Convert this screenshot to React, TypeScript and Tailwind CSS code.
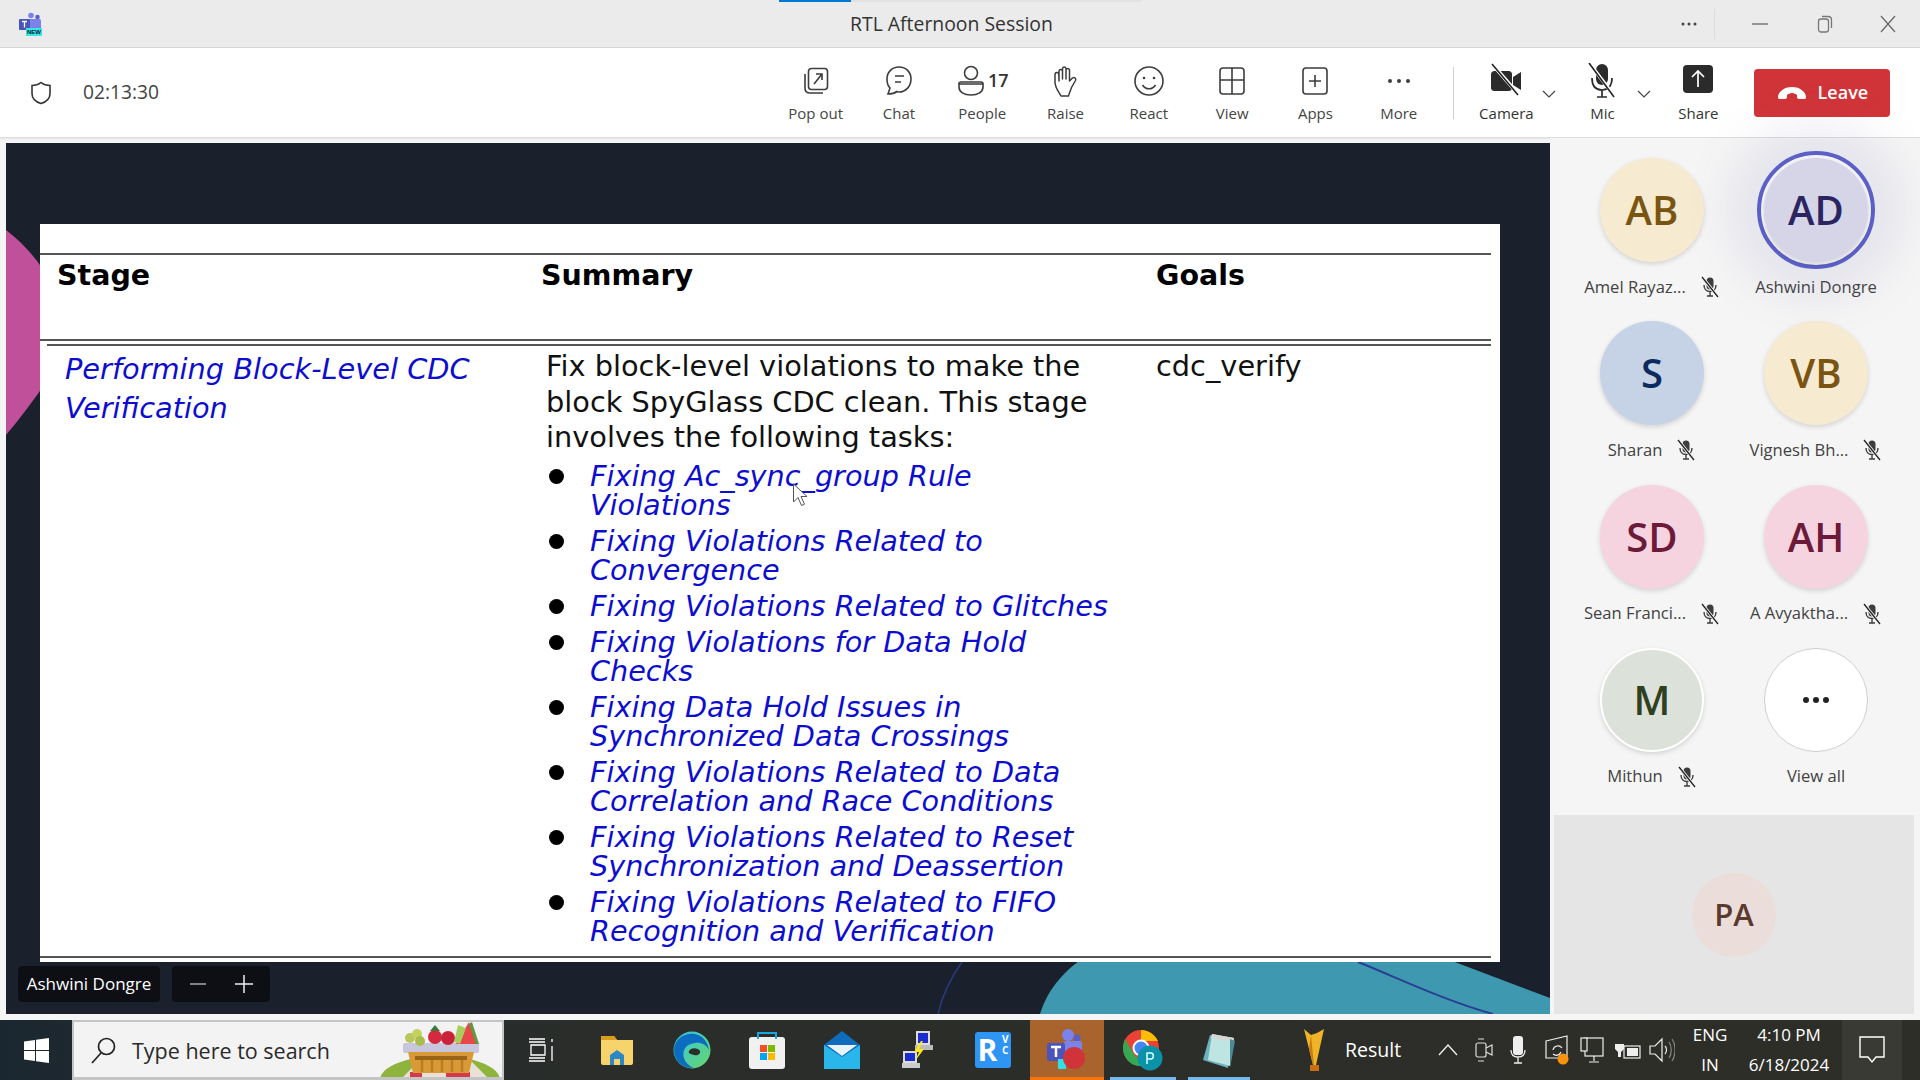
import React from "react";

const tools: { label: string; icon: React.ReactNode; wide?: boolean }[] = [
  { label: "Pop out", icon: <svg width="30" height="30" viewBox="0 0 30 30" fill="none" stroke="#3d3d3d" strokeWidth="1.6"><rect x="7.5" y="2.5" width="19" height="21" rx="3" /><path d="M4 8v14c0 3 2 5 5 5h13" /><path d="M13 18l8-10M15 8h6v6" /></svg> },
  { label: "Chat", icon: <svg width="30" height="32" viewBox="0 0 30 32" fill="none" stroke="#3d3d3d" strokeWidth="1.6"><path d="M15 2C8 2 3 7 3 14c0 4 1 7 3 9l-2 6c3 0 7-1 9-2.500 1 .300 1.500.500 2 .500 7 0 12-6 12-13S22 2 15 2z" /><path d="M11 11h9M11 17h6" /></svg> },
  { label: "People", icon: <svg width="30" height="32" viewBox="0 0 30 32" fill="none" stroke="#3d3d3d" strokeWidth="1.6"><circle cx="15" cy="8" r="6.500" /><path d="M3 19h24v3c0 5-5 8-12 8S3 27 3 22z" /><path d="M3 19c0-1 1-2 2-2h20c1 0 2 1 2 2" /></svg> },
  { label: "Raise", icon: <svg width="28" height="32" viewBox="0 0 28 32" fill="none" stroke="#3d3d3d" strokeWidth="1.500" strokeLinejoin="round"><path d="M7 16V6a1.800 1.800 0 013.500 0v8V3.500a1.800 1.800 0 013.500 0V14V5a1.800 1.800 0 013.500 0v11l3-3c2-1.500 4 .500 3 2.500l-4 7c-1 3-2 5-3 8.500H9C7 27 3 23 3 17V9.500a1.900 1.900 0 013.800 0z" /></svg> },
  { label: "React", icon: <svg width="32" height="32" viewBox="0 0 32 32" fill="none" stroke="#3d3d3d" strokeWidth="1.600"><circle cx="16" cy="16" r="14" /><circle cx="11" cy="13" r="1.300" fill="#3d3d3d" stroke="none" /><circle cx="21" cy="13" r="1.300" fill="#3d3d3d" stroke="none" /><path d="M9.500 20c3 5 10 5 13 0" /></svg> },
  { label: "View", icon: <svg width="30" height="32" viewBox="0 0 30 32" fill="none" stroke="#3d3d3d" strokeWidth="1.600"><rect x="3" y="3" width="24" height="26" rx="3" /><path d="M15 3v26M3 15h24" /></svg> },
  { label: "Apps", icon: <svg width="30" height="32" viewBox="0 0 30 32" fill="none" stroke="#3d3d3d" strokeWidth="1.600"><rect x="3" y="3" width="24" height="26" rx="3" /><path d="M15 10v12M9 16h12" /></svg> },
  { label: "More", icon: <svg width="30" height="30" viewBox="0 0 30 30" fill="#3d3d3d"><circle cx="6" cy="15" r="2" /><circle cx="15" cy="15" r="2" /><circle cx="24" cy="15" r="2" /></svg> },
];

const MicOff = ({ c = "#3d3d3d" }: { c?: string }) => (
  <svg width="20" height="22" viewBox="0 0 20 22" fill="none">
    <rect x="6.500" y="1.500" width="7" height="12" rx="3.500" fill={c} />
    <path d="M4 9c0 4 2.500 6.500 6 6.500s6-2.500 6-6.500M10 15.500V20M7 20h6" stroke={c} strokeWidth="1.400" />
    <path d="M2 1l16 20" stroke="#f5f5f5" strokeWidth="3" />
    <path d="M2 1l16 20" stroke="#222" strokeWidth="1.300" />
  </svg>
);

const people = [
  { i: "AB", n: "Amel Rayaz...", bg: "bg-[#f6ead0]", fg: "text-[#7a5511]", mic: true },
  { i: "AD", n: "Ashwini Dongre", bg: "bg-[#d6d5e8]", fg: "text-[#2a2561]", mic: false, ring: true },
  { i: "S", n: "Sharan", bg: "bg-[#c6d3e7]", fg: "text-[#0c2a5e]", mic: true },
  { i: "VB", n: "Vignesh Bh...", bg: "bg-[#f6ead0]", fg: "text-[#7a5511]", mic: true },
  { i: "SD", n: "Sean Franci...", bg: "bg-[#f5d4e0]", fg: "text-[#6d1a3a]", mic: true },
  { i: "AH", n: "A Avyaktha...", bg: "bg-[#f5d4e0]", fg: "text-[#6d1a3a]", mic: true },
  { i: "M", n: "Mithun", bg: "bg-[#dce2da]", fg: "text-[#2f4020]", mic: true, white: true },
];

const items = [
  ["Fixing Ac_sync_group Rule", "Violations"],
  ["Fixing Violations Related to", "Convergence"],
  ["Fixing Violations Related to Glitches"],
  ["Fixing Violations for Data Hold", "Checks"],
  ["Fixing Data Hold Issues in", "Synchronized Data Crossings"],
  ["Fixing Violations Related to Data", "Correlation and Race Conditions"],
  ["Fixing Violations Related to Reset", "Synchronization and Deassertion"],
  ["Fixing Violations Related to FIFO", "Recognition and Verification"],
];

function TitleBar() {
  return (
    <div className="relative flex h-[48px] shrink-0 items-center border-b border-[#d6d6d6] bg-[#ebebeb]">
      <div className="absolute left-[779px] top-0 h-[2px] w-[72px] bg-[#0078d4]" />
      <div className="absolute left-[851px] top-0 h-[2px] w-[290px] bg-[#e2e2e2]" />
      <div className="relative ml-[18px] h-[24px] w-[26px]">
        <svg width="26" height="24" viewBox="0 0 26 24">
          <circle cx="13" cy="3.500" r="2.800" fill="#7b83eb" />
          <circle cx="19.500" cy="5" r="2.300" fill="#5b5fc7" />
          <rect x="10" y="7" width="13" height="11" rx="1.500" fill="#7b83eb" />
          <rect x="1" y="7" width="11" height="11" rx="1" fill="#4b53bc" />
          <path d="M4 9.500h5M6.500 9.500v6" stroke="#fff" strokeWidth="1.300" />
        </svg>
        <span className="absolute bottom-[0px] left-[8px] h-[8px] bg-[#36e5e5] px-[1px] font-['Liberation_Sans',sans-serif] text-[6px] font-bold leading-[8px] text-[#123]">NEW</span>
      </div>
      <div className="ml-[806px] font-['Open_Sans',sans-serif] text-[19.400px] text-[#333]">RTL Afternoon Session</div>
      <div className="ml-auto flex h-full items-center">
        <svg width="18" height="6" viewBox="0 0 18 6" fill="#444"><circle cx="3" cy="3" r="1.500" /><circle cx="9" cy="3" r="1.500" /><circle cx="15" cy="3" r="1.500" /></svg>
        <div className="ml-[16px] h-[30px] w-px bg-[#dcdcdc]" />
        <svg className="ml-[37px]" width="16" height="2" viewBox="0 0 16 2"><path d="M0 1h16" stroke="#777" strokeWidth="1.500" /></svg>
        <svg className="ml-[49px]" width="16" height="18" viewBox="0 0 16 18" fill="none" stroke="#777" strokeWidth="1.300"><rect x="1.500" y="4" width="10" height="13" rx="2.500" /><path d="M5 1.500h6c2 0 3.500 1.500 3.500 3.500v8" /></svg>
        <svg className="ml-[47px] mr-[24px]" width="16" height="18" viewBox="0 0 16 18" fill="none" stroke="#666" strokeWidth="1.200"><path d="M1 1l14 16M15 1L1 17" /></svg>
      </div>
    </div>
  );
}

function Toolbar() {
  return (
    <div className="flex h-[90px] shrink-0 items-center border-b border-[#dedede] bg-white font-['Open_Sans',sans-serif] shadow-[0_1px_2px_rgba(0,0,0,0.08)]">
      <svg className="ml-[30px]" width="22" height="26" viewBox="0 0 22 24" fill="none" stroke="#333" strokeWidth="1.600"><path d="M11 1.500c2.500 2 5.500 3 9 3v8c0 5-4 8.500-9 10-5-1.500-9-5-9-10v-8c3.500 0 6.500-1 9-3z" /></svg>
      <div className="ml-[31px] w-[76px] whitespace-nowrap text-[19.200px] text-[#444]">02:13:30</div>
      <div className="ml-[615px] flex">
        {tools.map((t) => (
          <div key={t.label} className="flex h-[60px] w-[83.300px] flex-col items-center justify-between">
            <div className="flex h-[36px] items-center">
              {t.icon}
              {t.label === "People" && <span className="ml-[2px] text-[18px] font-semibold text-[#333]">17</span>}
            </div>
            <div className="text-[15px] leading-[20px] text-[#444]">{t.label}</div>
          </div>
        ))}
      </div>
      <div className="ml-[13px] h-[52px] w-px bg-[#cfcfcf]" />
      <div className="relative ml-[21px] flex h-[60px] w-[62px] flex-col items-center justify-between">
        <svg width="34" height="34" viewBox="0 0 34 34"><rect x="2" y="8" width="21" height="20" rx="3.500" fill="#2b2b2b" /><path d="M24 14l8-5v18l-8-5z" fill="#2b2b2b" /><path d="M4 2l26 30" stroke="#fff" strokeWidth="3.500" /><path d="M3 1l26 31" stroke="#222" strokeWidth="1.600" /></svg>
        <div className="text-[15px] leading-[20px] text-[#333]">Camera</div>
      </div>
      <svg className="mt-[2px] ml-[5px]" width="14" height="8" viewBox="0 0 14 8" fill="none" stroke="#444" strokeWidth="1.200"><path d="M1 1l6 6 6-6" /></svg>
      <div className="ml-[26px] flex h-[60px] w-[40px] flex-col items-center justify-between">
        <svg width="32" height="36" viewBox="0 0 32 36" fill="none"><rect x="10" y="1" width="12" height="21" rx="6" fill="#2b2b2b" /><path d="M6 15c0 8 4 12 10 12s10-4 10-12M16 27v7M11 34h10" stroke="#2b2b2b" strokeWidth="1.700" /><path d="M4 1l25 33" stroke="#fff" strokeWidth="3.500" /><path d="M3 0l25 34" stroke="#222" strokeWidth="1.600" /></svg>
        <div className="text-[15px] leading-[20px] text-[#333]">Mic</div>
      </div>
      <svg className="mt-[2px] ml-[15px]" width="14" height="8" viewBox="0 0 14 8" fill="none" stroke="#444" strokeWidth="1.200"><path d="M1 1l6 6 6-6" /></svg>
      <div className="ml-[17px] flex h-[60px] w-[60px] flex-col items-center justify-between">
        <svg className="mt-[1px]" width="32" height="32" viewBox="0 0 32 32" fill="none"><rect x="1" y="1" width="30" height="28" rx="4" fill="#2b2b2b" /><path d="M16 23V8M10 13l6-6 6 6" stroke="#fff" strokeWidth="1.700" /></svg>
        <div className="text-[15px] leading-[20px] text-[#333]">Share</div>
      </div>
      <div className="ml-[26px] flex h-[48px] w-[136px] items-center justify-center gap-[11px] rounded-[4px] bg-[#d13438] text-[18px] font-semibold text-white">
        <svg width="30" height="14" viewBox="0 0 30 14" fill="#fff"><path d="M1 11c0-5 6-10 14-10s14 5 14 10c0 2-1 2-2 2h-5c-1 0-2-1-2-2v-2c-1-1-3-2-5-2s-4 1-5 2v2c0 1-1 2-2 2H3c-1 0-2 0-2-2z" /></svg>
        <span>Leave</span>
      </div>
    </div>
  );
}

function Slide() {
  return (
    <div className="relative mt-[5px] ml-[6px] h-[871px] w-[1544px] shrink-0 overflow-hidden bg-[#1a202c]">
      <svg className="absolute inset-0" width="1544" height="871" viewBox="0 0 1544 871" fill="none">
        <path d="M0 87C14 98 26 110 36 125V245C22 265 10 280 0 292z" fill="#c1509a" />
        <path d="M1034 871C1042 845 1060 825 1085 810L1425 810L1544 855V871z" fill="#3e99b0" />
        <path d="M1352 819c40 16 90 40 135 52" stroke="#2a3f92" strokeWidth="2" />
        <path d="M932 871c5-22 14-38 24-52" stroke="#2a3a80" strokeWidth="1.500" />
      </svg>
      <div className="relative ml-[34px] mt-[81px] h-[738px] w-[1460px] bg-white pt-[29px] font-['DejaVu_Sans',sans-serif] text-[#111]">
        <div className="mr-[9px] h-[2px] bg-[#555]" />
        <div className="grid h-[84px] grid-cols-[484px_615px_1fr] pl-[17px] pt-[1px] text-[28.500px] font-bold leading-[40px] text-black">
          <div>Stage</div>
          <div>Summary</div>
          <div>Goals</div>
        </div>
        <div className="mr-[9px] h-[2px] bg-[#555]" />
        <div className="ml-[7px] mr-[9px] mt-[3px] h-[2px] bg-[#555]" />
        <div className="grid grid-cols-[481px_610px_1fr] pl-[25px] pt-[3px] text-[28.800px]">
          <div className="pt-[1px] italic leading-[38.500px] text-[#0d0dcf]">
            <div className="whitespace-nowrap">Performing Block-Level CDC</div>
            <div>Verification</div>
          </div>
          <div>
            <div className="whitespace-nowrap leading-[35.500px]">
              <div>Fix block-level violations to make the</div>
              <div>block SpyGlass CDC clean. This stage</div>
              <div>involves the following tasks:</div>
            </div>
            <div className="mt-[6px] flex flex-col gap-[7px] text-[28.700px]">
              {items.map((lines) => (
                <div key={lines[0]} className="flex">
                  <div className="mt-[7px] ml-[3px] h-[15px] w-[15px] shrink-0 rounded-full bg-black" />
                  <div className="ml-[26px] whitespace-nowrap italic leading-[29px] text-[#0d0dcf]">
                    {lines.map((l) => (
                      <div key={l}>{l}</div>
                    ))}
                  </div>
                </div>
              ))}
            </div>
          </div>
          <div className="leading-[35.500px]">cdc_verify</div>
        </div>
        <div className="absolute bottom-[4px] left-0 right-[9px] h-[2px] bg-[#555]" />
        <svg className="absolute left-[752px] top-[259px]" width="18" height="24" viewBox="0 0 18 24" fill="#fff" stroke="#555" strokeWidth="1"><path d="M1.500 1v18l4.500-4.500 3.500 8 3-1.300-3.500-7.700h6z" /></svg>
      </div>
      <div className="absolute left-[12px] top-[823px] flex h-[36px] w-[142px] items-center justify-center rounded-[4px] bg-[#0d0f14] font-['Open_Sans',sans-serif] text-[17px] text-white">Ashwini Dongre</div>
      <div className="absolute left-[166px] top-[823px] flex h-[36px] w-[98px] items-center justify-center gap-[29px] rounded-[4px] bg-[#0d0f14]">
        <svg width="16" height="2" viewBox="0 0 16 2"><path d="M0 1h16" stroke="#aaa" strokeWidth="1.500" /></svg>
        <svg width="18" height="18" viewBox="0 0 18 18"><path d="M0 9h18M9 0v18" stroke="#eee" strokeWidth="1.500" /></svg>
      </div>
    </div>
  );
}

function Panel() {
  return (
    <div className="flex min-w-0 flex-1 flex-col bg-[#f5f5f5] font-['Open_Sans',sans-serif]">
      <div className="grid grid-cols-[164px_164px] pl-[20px] pt-[20px]">
        {people.map((p) => (
          <div key={p.i} className="flex h-[163.300px] flex-col items-center">
            <div className="relative h-[104px] w-[104px]">
              {p.ring && <div className="absolute -inset-[7px] rounded-full border-[4px] border-[#5b5fc7] shadow-[0_0_50px_25px_rgba(98,100,167,0.13)]" />}
              <div className={`relative flex h-full w-full items-center justify-center rounded-full ${p.bg} ${p.white ? "border-2 border-white" : ""} shadow-[0_2px_5px_rgba(0,0,0,0.14)]`}>
                <span className={`text-[40px] font-semibold leading-none ${p.fg}`}>{p.i}</span>
              </div>
            </div>
            <div className="mt-[14px] flex h-[22px] items-center gap-[14px] whitespace-nowrap text-[16.600px] text-[#424242]">
              <span>{p.n}</span>
              {p.mic && <MicOff />}
            </div>
          </div>
        ))}
        <div className="flex h-[163.300px] flex-col items-center">
          <div className="flex h-[104px] w-[104px] items-center justify-center gap-[4px] rounded-full border border-[#cfcfcf] bg-white">
            <span className="h-[6px] w-[6px] rounded-full bg-[#222]" />
            <span className="h-[6px] w-[6px] rounded-full bg-[#222]" />
            <span className="h-[6px] w-[6px] rounded-full bg-[#222]" />
          </div>
          <div className="mt-[14px] flex h-[22px] items-center text-[16.600px] text-[#424242]">View all</div>
        </div>
      </div>
      <div className="ml-[4px] mr-[6px] mt-[4px] flex h-[199px] items-center justify-center bg-[#e5e5e5]">
        <div className="flex h-[84px] w-[84px] items-center justify-center rounded-full bg-[#eaddda] text-[31px] font-semibold text-[#5b3a2e]">PA</div>
      </div>
    </div>
  );
}

const Slot = ({ w, children, active, open }: { w: string; children: React.ReactNode; active?: boolean; open?: boolean }) => (
  <div className={`relative flex h-full shrink-0 items-center justify-center ${w} ${active ? "bg-[#a9632d]" : ""}`}>
    {children}
    {active && <div className="absolute bottom-0 left-0 right-0 h-[3px] bg-[#f7740d]" />}
    {open && <div className="absolute bottom-0 left-[6px] right-[6px] h-[3px] bg-[#76b9ed]" />}
  </div>
);

function Taskbar() {
  return (
    <div className="flex h-[60px] shrink-0 items-stretch bg-[linear-gradient(90deg,#1b2730_0%,#2a2d2a_30%,#2e2e28_100%)] font-['Open_Sans',sans-serif] text-white">
      <div className="flex w-[72px] shrink-0 items-center justify-center">
        <svg width="25" height="25" viewBox="0 0 25 25" fill="#fff"><path d="M0 3.500l11-1.600v10H0zM12 1.700L25 0v12H12zM0 13h11v10L0 21.400zM12 13h13v12l-13-1.800z" /></svg>
      </div>
      <div className="relative flex w-[432px] shrink-0 items-center overflow-hidden border-2 border-b-[3px] border-[#c4c4c4] bg-[#f3f3f3] text-[#222]">
        <svg className="ml-[16px]" width="28" height="28" viewBox="0 0 28 28" fill="none" stroke="#222" strokeWidth="1.700"><circle cx="16.500" cy="10.500" r="8" /><path d="M11 17L2 27" /></svg>
        <span className="ml-[14px] mt-[4px] text-[21.500px] text-[#2a2a2a]">Type here to search</span>
        <svg className="absolute right-0 top-0" width="122" height="58" viewBox="0 0 122 58">
          <ellipse cx="60" cy="58" rx="60" ry="24" fill="#8fb43e" />
          <path d="M20 58l20-20h50l20 20z" fill="#e9e0d8" />
          <path d="M30 50h12v8H30zM54 42h12v8H54zM78 50h12v8H78zM42 42h10v8H42zM66 50h12v8H66z" fill="#d63a4a" />
          <rect x="23" y="21" width="76" height="10" rx="2" fill="#c8c6dc" />
          <path d="M28 30h66l-5 21H33z" fill="#d79a37" />
          <path d="M35 34h52v4H35z" fill="#9a6418" />
          <path d="M42 38v12M52 38v12M62 38v12M72 38v12M82 38v12" stroke="#b97d22" strokeWidth="2.500" />
          <circle cx="30" cy="16" r="5" fill="#b8c85a" /><circle cx="37" cy="12" r="5" fill="#c5d263" /><circle cx="40" cy="19" r="5" fill="#a9bc4c" />
          <circle cx="55" cy="15" r="7" fill="#d4293f" /><circle cx="68" cy="16" r="7" fill="#c9233a" />
          <path d="M50 9l5-6 5 6z" fill="#3a7a3a" />
          <path d="M76 22L89 0l8 22z" fill="#e8474a" />
          <path d="M92 0l7 22h-3L89 2z" fill="#5b9c43" />
          <path d="M74 20L78 3l8 3-6 16z" fill="#a8cf5e" />
        </svg>
      </div>
      <Slot w="w-[75px]">
        <svg width="25" height="24" viewBox="0 0 25 24" fill="none" stroke="#fff" strokeWidth="1.300"><path d="M0 1h16M0 4h16M2 7h14v10H2zM0 20h16M0 23h16" /><path d="M23 1v3M23 8v15" /></svg>
      </Slot>
      <Slot w="w-[75px]">
        <svg width="34" height="30" viewBox="0 0 34 30"><path d="M1 1h13l3 4h16v23c0 1-1 2-2 2H3c-1 0-2-1-2-2z" fill="#f7d36c" /><path d="M1 1h13l3 4H1z" fill="#d89c20" /><path d="M10 30V20l7-5 7 5v10h-4v-6h-6v6z" fill="#2b87c8" /></svg>
      </Slot>
      <Slot w="w-[75px]">
        <svg width="38" height="38" viewBox="0 0 38 38"><defs><linearGradient id="eg" x1="0" y1="0" x2="1" y2="1"><stop offset="0" stopColor="#34c4e6" /><stop offset="1" stopColor="#67d76a" /></linearGradient></defs><circle cx="19" cy="19" r="18.500" fill="url(#eg)" /><path d="M1 19C1 8 12 1 22 3c9 2 13 9 14 16-3-6-9-8-14-7C12 13 9 20 11 27c1 4 5 8 10 10C10 38 1 30 1 19z" fill="#0c6dc0" /><path d="M16 20c3-4 9-3 11 0 1 3-3 5-6 4-4-1-6-2-5-4z" fill="#2b2f2a" /></svg>
      </Slot>
      <Slot w="w-[75px]">
        <svg width="36" height="38" viewBox="0 0 36 38" fill="none"><rect x="0" y="6" width="36" height="32" rx="3" fill="#f1f1f1" /><path d="M9 8V2h18v6" stroke="#18a8e0" strokeWidth="2" /><rect x="11" y="14" width="7" height="7" fill="#f25022" /><rect x="19" y="14" width="7" height="7" fill="#7fba00" /><rect x="11" y="22" width="7" height="7" fill="#00a4ef" /><rect x="19" y="22" width="7" height="7" fill="#ffb900" /></svg>
      </Slot>
      <Slot w="w-[75px]">
        <svg width="36" height="38" viewBox="0 0 36 38"><path d="M0 14L18 0l18 14v24H0z" fill="#0f6cbd" /><path d="M0 14l18 12 18-12v24H0z" fill="#29b6ea" /><path d="M3 14h30L18 25z" fill="#e8f3fa" /></svg>
      </Slot>
      <Slot w="w-[76px]">
        <svg width="36" height="40" viewBox="0 0 36 40"><rect x="17" y="1" width="14" height="14" fill="#ddd" /><rect x="19" y="3" width="10" height="10" fill="#1b2dcf" /><rect x="16" y="15" width="18" height="5" fill="#bbb" /><rect x="4" y="21" width="14" height="12" fill="#ddd" /><rect x="6" y="23" width="10" height="8" fill="#1b2dcf" /><rect x="3" y="33" width="18" height="5" fill="#ccc" /><path d="M22 11l-7 11h5l-4 9 9-12h-5l4-8z" fill="#ffe81a" /></svg>
      </Slot>
      <Slot w="w-[75px]">
        <div className="relative flex h-[36px] w-[36px] items-center justify-center rounded-[3px] bg-[#2f95f5] text-[30px] font-bold leading-none text-white">
          <span className="-ml-[10px]">R</span>
          <span className="absolute right-[2px] top-[2px] text-[10px] leading-[11px]">V<br />C</span>
        </div>
      </Slot>
      <Slot w="w-[74px]" active>
        <svg width="40" height="42" viewBox="0 0 40 42"><circle cx="21" cy="6" r="6" fill="#7b83eb" /><circle cx="30" cy="9" r="3.500" fill="#5b5fc7" /><rect x="17" y="12" width="18" height="16" rx="2" fill="#7b83eb" /><rect x="0" y="14" width="18" height="18" rx="2" fill="#4b53bc" /><path d="M4 18h10M9 18v10" stroke="#fff" strokeWidth="2.500" /><rect x="11" y="30" width="8" height="10" fill="#30e0e6" /><circle cx="27" cy="29" r="11" fill="#d13438" /></svg>
      </Slot>
      <Slot w="w-[78px]" open>
        <svg width="42" height="42" viewBox="0 0 42 42"><circle cx="19" cy="19" r="18" fill="#ea4335" /><path d="M3 10l10 17 10 9C11 40 1 30 1 19c0-3 1-6 2-9z" fill="#34a853" /><path d="M19 1c8 0 14 5 17 11H19z" fill="#fbbc04" /><circle cx="19" cy="19" r="8.500" fill="#fff" /><circle cx="19" cy="19" r="6.500" fill="#4285f4" /><circle cx="28" cy="29" r="12.500" fill="#0a93a8" /><path d="M25 35V24h4c3 0 3 6 0 6h-4" stroke="#dff" strokeWidth="1.500" fill="none" /></svg>
      </Slot>
      <Slot w="w-[74px]" open>
        <svg width="36" height="38" viewBox="0 0 36 38"><path d="M9 4l22 4-4 29L2 29z" fill="#6db3bd" /><path d="M11 3l22 4-4 28-22-6z" fill="#bfe5e2" /><path d="M11 3l22 4-1 4-22-4z" fill="#d6d6d6" /><path d="M29 8l5 2-5 27z" fill="#4c8a94" /></svg>
      </Slot>
      <div className="ml-[42px] flex w-[32px] shrink-0 items-center justify-center">
        <svg width="22" height="42" viewBox="0 0 22 42"><path d="M1 0l7 6 6-2 7-4-4 18-4 18h3v6H7v-6h3L6 20z" fill="#f0b429" /><path d="M8 6l3 30h-1L6 20z" fill="#c97c12" /><path d="M7 36h9v6H7z" fill="#c96d10" /></svg>
      </div>
      <div className="ml-[15px] flex w-[55px] items-center whitespace-nowrap text-[19.500px]">Result</div>
      <div className="ml-[38px] flex w-[250px] shrink-0 items-center">
        <svg width="20" height="12" viewBox="0 0 20 12" fill="none" stroke="#eee" strokeWidth="1.400"><path d="M1 11l9-10 9 10" /></svg>
        <svg className="ml-[17px]" width="18" height="24" viewBox="0 0 18 24" fill="none" stroke="#ddd" strokeWidth="1.200"><rect x="1" y="5" width="10" height="14" rx="2" /><path d="M11 10l6-3v10l-6-3M3 1h6M3 23h6" /></svg>
        <svg className="ml-[17px]" width="16" height="28" viewBox="0 0 16 28"><rect x="3" y="0" width="10" height="19" rx="3" fill="#eee" /><path d="M1 14c0 5 3 7 7 7s7-2 7-7M8 21v6M4 27h8" stroke="#eee" strokeWidth="1.300" fill="none" /></svg>
        <svg className="ml-[19px]" width="24" height="30" viewBox="0 0 24 30" fill="none" stroke="#eee" strokeWidth="1.200"><path d="M1 6l21-5v22H1z" /><path d="M8 15a5 5 0 019-2M16 17a5 5 0 01-8 2" /><circle cx="18" cy="24" r="5.500" fill="#f7930e" stroke="none" /></svg>
        <svg className="ml-[11px]" width="24" height="26" viewBox="0 0 24 26" fill="none" stroke="#eee" strokeWidth="1.200"><rect x="5" y="1" width="18" height="18" /><rect x="1" y="1" width="6" height="13" fill="#2e2e28" /><path d="M14 19v5M9 25h10" /></svg>
        <svg className="ml-[11px]" width="26" height="24" viewBox="0 0 26 24" fill="#eee"><path d="M2 1v5M7 1v5M0 6h9v5l-3 3v5H3v-5l-3-3z" /><rect x="9" y="8" width="16" height="12" fill="none" stroke="#eee" strokeWidth="1.200" /><rect x="12" y="10" width="11" height="8" /></svg>
        <svg className="ml-[8px]" width="26" height="26" viewBox="0 0 26 26" fill="none" stroke="#eee" strokeWidth="1.200"><path d="M1 9h5l7-7v22l-7-7H1zM16 9c2 2 2 6 0 8" /><path d="M20 5c3 4 3 12 0 16M23 2c4 6 4 16 0 22" stroke="#888" /></svg>
      </div>
      <div className="flex w-[44px] shrink-0 flex-col items-center justify-center gap-[6px] text-[17px] leading-[24px]"><span>ENG</span><span>IN</span></div>
      <div className="ml-[12px] flex w-[90px] shrink-0 flex-col items-center justify-center gap-[6px] text-[17px] leading-[24px]"><span>4:10 PM</span><span>6/18/2024</span></div>
      <div className="ml-[8px] flex w-[60px] shrink-0 items-center justify-center bg-[#3a3a34]">
        <svg width="26" height="28" viewBox="0 0 26 28" fill="none" stroke="#fff" strokeWidth="1.400"><path d="M1 1h24v20h-8l-4 5-4-5H1z" /></svg>
      </div>
      <div className="flex-1" />
    </div>
  );
}

export default function App() {
  return (
    <div className="flex h-[1080px] w-[1920px] flex-col overflow-hidden bg-[#f5f5f5]">
      <TitleBar />
      <Toolbar />
      <div className="flex h-[882px] shrink-0">
        <Slide />
        <Panel />
      </div>
      <Taskbar />
    </div>
  );
}
